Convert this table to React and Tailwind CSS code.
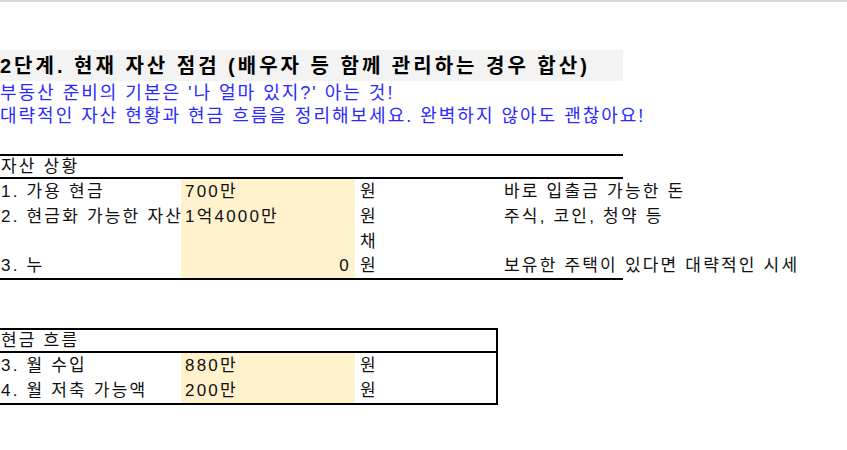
const font = { fontFamily: '"Liberation Sans", "Noto Sans CJK KR", sans-serif' };

const Row = ({ label, value, unit, note, right, tall }) => (
    <div className={`flex items-end ${tall ? 'h-[49px]' : 'h-[25px]'}`}>
        <div className="w-[181px] shrink-0 overflow-hidden whitespace-nowrap pl-[1px] leading-[24px]">{label}</div>
        <div className={`w-[174px] shrink-0 h-full bg-[#fff2cc] flex items-end px-[4px] leading-[24px] ${right ? 'justify-end' : ''}`}>{value}</div>
        <div className="w-[149px] shrink-0 pl-[5px] leading-[24px]">{unit}</div>
        {note && <div className="whitespace-nowrap leading-[24px]">{note}</div>}
    </div>
);

export default function App() {
    return (
        <div className="w-[847px] h-[450px] bg-white text-[17px] tracking-[2.2px] text-[#111] overflow-hidden" style={font}>
            <div className="h-[2px] bg-[#dadada]" />

            <div className="pt-[48px]">
                <div className="w-[623px] h-[31px] bg-[#f3f3f3] flex items-center font-bold text-[20px] tracking-[3px] text-black whitespace-nowrap">
                    2단계. 현재 자산 점검 (배우자 등 함께 관리하는 경우 합산)
                </div>
                <div className="text-[#2a2aff] text-[18px] tracking-[2px] leading-[23px] pt-[1px] whitespace-nowrap">
                    <div>부동산 준비의 기본은 '나 얼마 있지?' 아는 것!</div>
                    <div>대략적인 자산 현황과 현금 흐름을 정리해보세요. 완벽하지 않아도 괜찮아요!</div>
                </div>
            </div>

            {/* 자산 상황 */}
            <div className="mt-[26px] w-[623px] border-t-2 border-b-2 border-black">
                <div className="h-[23px] leading-[22px] pl-[1px] border-b-2 border-black">자산 상황</div>
                <Row label="1. 가용 현금" value="700만" unit="원" note="바로 입출금 가능한 돈" />
                <Row label="2. 현금화 가능한 자산" value="1억4000만" unit="원" note="주식, 코인, 청약 등" />
                <Row label="3. 누" value="0" right tall unit={<div className="flex flex-col"><span>채</span><span>원</span></div>} note="보유한 주택이 있다면 대략적인 시세" />
            </div>

            {/* 현금 흐름 */}
            <div className="mt-[48px] w-[498px] border-t-2 border-b-2 border-r-2 border-black">
                <div className="h-[23px] leading-[22px] pl-[1px] border-b-2 border-black">현금 흐름</div>
                <Row label="3. 월 수입" value="880만" unit="원" />
                <Row label="4. 월 저축 가능액" value="200만" unit="원" />
            </div>
        </div>
    );
}
